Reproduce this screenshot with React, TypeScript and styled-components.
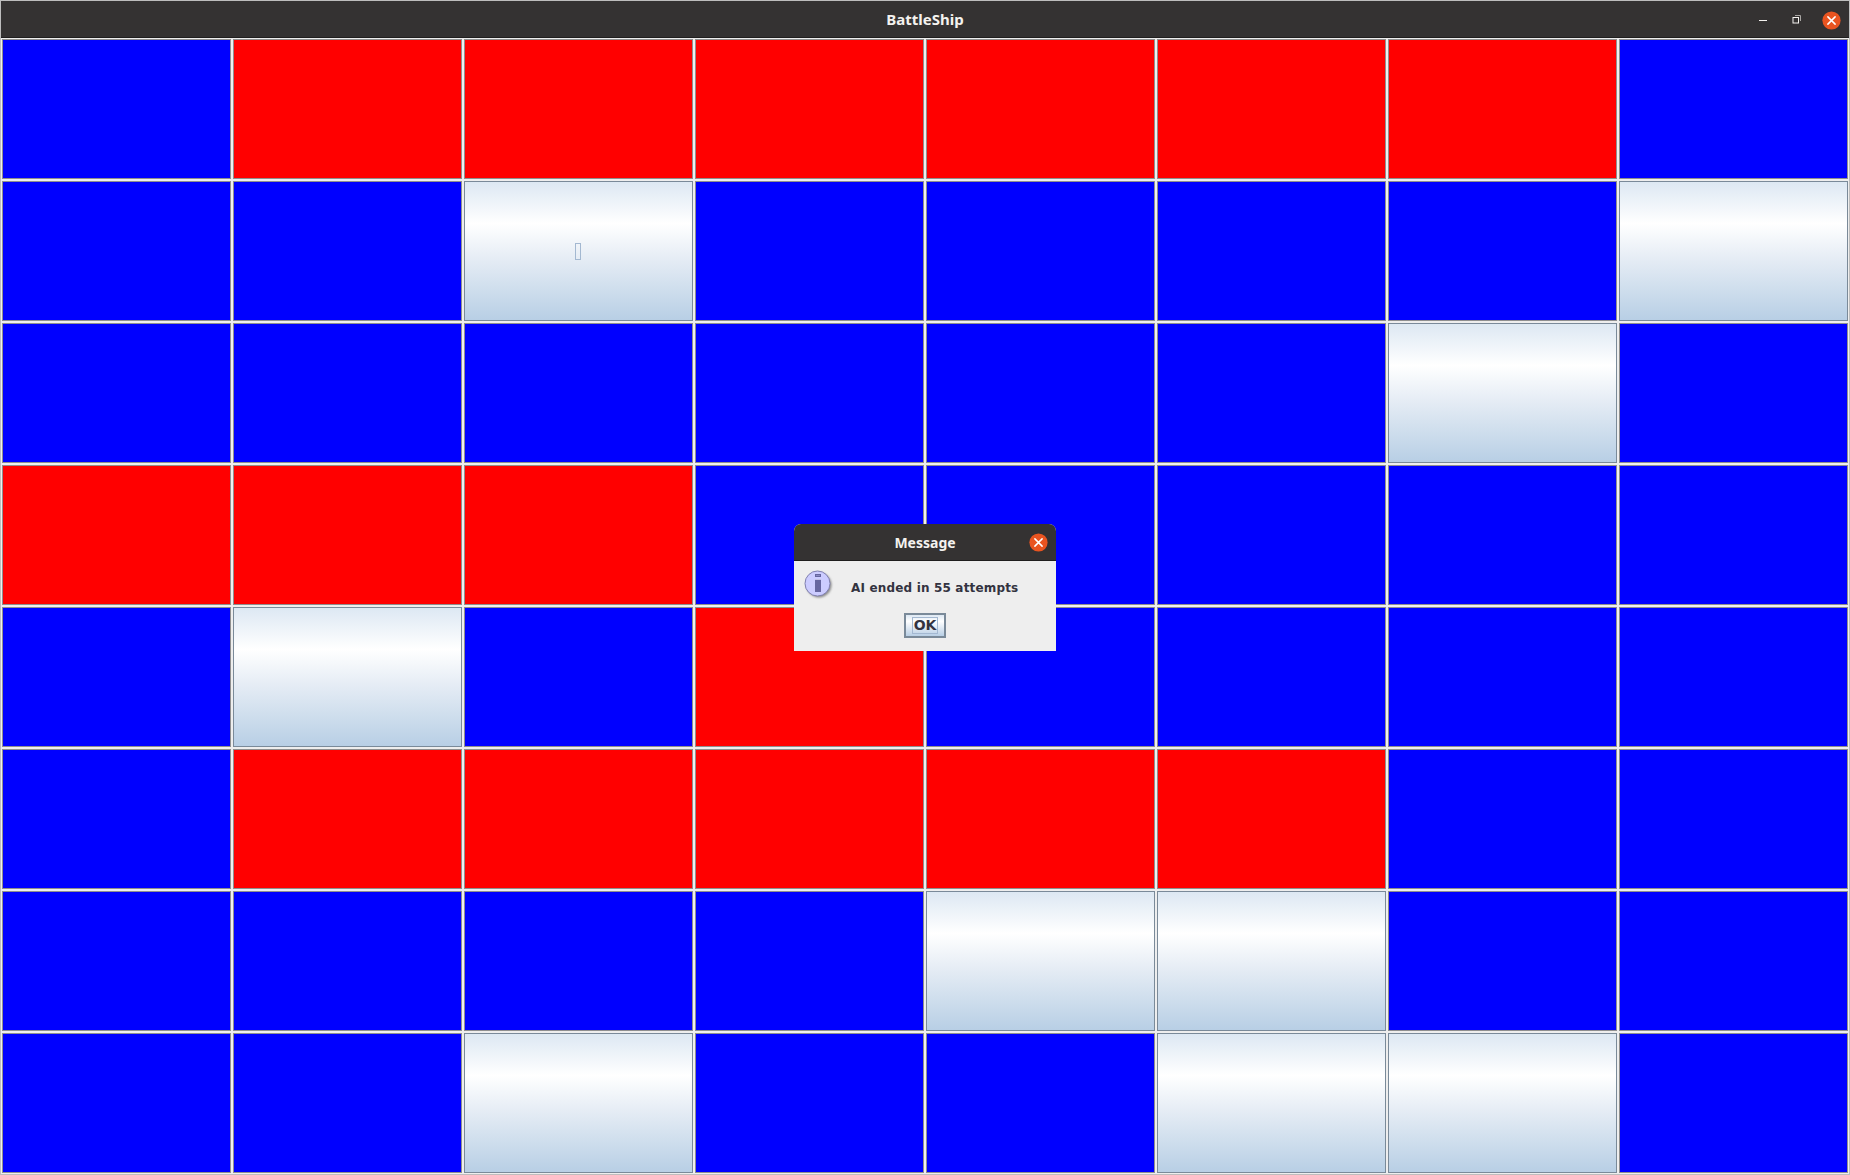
import { createGlobalStyle, styled } from "styled-components";

const GlobalStyle = createGlobalStyle`
    html, body {
        margin: 0;
        padding: 0;
        background: #eeeeee;
    }
    #root {
        width: 1850px;
        height: 1175px;
    }
`

const Win = styled.div`
    position: relative;
    width: 1850px;
    height: 1175px;
    overflow: hidden;
    box-sizing: border-box;
    display: flex;
    flex-direction: column;
    background: #eeeeee;
    box-shadow: inset 0 0 0 1px #bdbdbd;
`
const TitleBar = styled.header`
    position: relative;
    flex: none;
    height: 37px;
    margin: 1px 1px 0;
    background: #343232;
    border-bottom: 1px solid #1f1e1e;
    box-sizing: border-box;
    display: flex;
    align-items: center;
    justify-content: center;
    color: #f4f2ef;
    font: bold 15px "Noto Sans", sans-serif;
`
const WinControls = styled.div`
    position: absolute;
    right: 8px;
    top: 9px;
    display: flex;
    align-items: center;
    gap: 20px;
`
const CtlIcon = styled.svg`
    display: block;
`
const MinIcon = styled(CtlIcon)`
    margin-right: 4px;
`
const Board = styled.main`
    flex: none;
    margin: 1px 0 0 2px;
    width: 1846px;
    display: grid;
    grid-template-columns: repeat(8, 229px);
    grid-auto-rows: 140px;
    gap: 2px;
`
const Cell = styled.div<{ $kind: "b" | "r" | "m" }>`
    box-sizing: border-box;
    border: 1px solid ${p => (p.$kind === "m" ? "#7a8a99" : "#8f8f8f")};
    display: flex;
    align-items: center;
    justify-content: center;
    background: ${p =>
        p.$kind === "b"
            ? "#0000ff"
            : p.$kind === "r"
            ? "#ff0000"
            : "linear-gradient(180deg, #dde8f3 0%, #ffffff 30%, #e6edf5 55%, #b8cfe5 100%)"};
`
const Tofu = styled.span`
    box-sizing: border-box;
    width: 6px;
    height: 17px;
    margin-right: 2px;
    border: 1px solid #a3b8d1;
`
const Dialog = styled.section`
    position: absolute;
    left: 794px;
    top: 524px;
    width: 262px;
    height: 127px;
    background: #eeeeee;
    border-radius: 7px 7px 0 0;
    overflow: hidden;
    display: flex;
    flex-direction: column;
`
const DialogTitle = styled.header`
    position: relative;
    flex: none;
    height: 37px;
    box-sizing: border-box;
    background: #343232;
    border-bottom: 1px solid #1f1e1e;
    display: flex;
    align-items: center;
    justify-content: center;
    color: #f4f2ef;
    font: bold 14px "Noto Sans", sans-serif;
`
const DialogClose = styled.div`
    position: absolute;
    right: 8px;
    top: 9px;
`
const DialogBody = styled.div`
    flex: 1;
    display: flex;
    flex-direction: column;
    align-items: center;
    padding-top: 10px;
`
const MsgRow = styled.div`
    align-self: stretch;
    display: flex;
    align-items: center;
    padding-left: 10px;
    height: 28px;
    gap: 17px;
`
const Msg = styled.span`
    color: #333340;
    font: bold 12px "DejaVu Sans", sans-serif;
    letter-spacing: 0.17px;
    position: relative;
    top: 3px;
`
const OkBtn = styled.button`
    margin-top: 14px;
    width: 42px;
    height: 25px;
    padding: 0;
    box-sizing: border-box;
    border: 2px solid #7a8a99;
    background: linear-gradient(180deg, #dde8f3 0%, #ffffff 30%, #e6edf5 55%, #b8cfe5 100%);
    display: flex;
    align-items: center;
    justify-content: center;
    color: #333340;
    font: bold 14px "DejaVu Sans", sans-serif;
`
const OkFocus = styled.span`
    border: 1px solid #a3b8d1;
    padding: 0 1px;
    line-height: 15px;
`

const layout = [
    "brrrrrrb",
    "bbmbbbbm",
    "bbbbbbmb",
    "rrrbbbbb",
    "bmbrbbbb",
    "brrrrrbb",
    "bbbbmmbb",
    "bbmbbmmb",
];

function CloseBadge({ size }: { size: number }) {
    return (
        <CtlIcon width={size} height={size} viewBox="0 0 20 20">
            <circle cx="10" cy="10" r="9.6" fill="#e95420" />
            <path d="M6.2 6.2 13.8 13.8M13.8 6.2 6.2 13.8" stroke="#fff" strokeWidth="1.6" strokeLinecap="round" />
        </CtlIcon>
    );
}

function InfoIcon() {
    return (
        <CtlIcon width="30" height="30" viewBox="0 0 30 30">
            <defs>
                <filter id="sh" x="-20%" y="-20%" width="150%" height="150%">
                    <feGaussianBlur stdDeviation="1.2" />
                </filter>
            </defs>
            <circle cx="15" cy="15" r="12.5" fill="#8a8a8a" filter="url(#sh)" />
            <circle cx="13.5" cy="13.5" r="12.5" fill="#ccccff" stroke="#8080b0" strokeWidth="1" />
            <rect x="11" y="4" width="6" height="3" fill="#6666a0" />
            <rect x="11" y="9" width="6" height="13" fill="#6666a0" />
            <rect x="12" y="5" width="4" height="1" fill="#ccccff" opacity="0.35" />
            <rect x="11" y="9" width="6" height="1" fill="#e8e8ff" opacity="0.7" />
        </CtlIcon>
    );
}

export default function App() {
    return (
        <>
            <GlobalStyle />
            <Win>
                <TitleBar>
                    BattleShip
                    <WinControls>
                        <MinIcon width="10" height="20" viewBox="0 0 10 20">
                            <rect x="1" y="10" width="8" height="1" fill="#f4f2ef" />
                        </MinIcon>
                        <CtlIcon width="10" height="12" viewBox="0 0 10 12">
                            <path d="M3 1.5H8.5V7" fill="none" stroke="#a9a7a4" />
                            <rect x="1" y="3.5" width="5.5" height="5.5" fill="none" stroke="#f4f2ef" />
                        </CtlIcon>
                        <CloseBadge size={19} />
                    </WinControls>
                </TitleBar>
                <Board>
                    {layout.flatMap((row, r) =>
                        row.split("").map((k, c) => (
                            <Cell key={`${r}-${c}`} $kind={k as "b" | "r" | "m"}>
                                {r === 1 && c === 2 && <Tofu />}
                            </Cell>
                        ))
                    )}
                </Board>
                <Dialog>
                    <DialogTitle>
                        Message
                        <DialogClose>
                            <CloseBadge size={19} />
                        </DialogClose>
                    </DialogTitle>
                    <DialogBody>
                        <MsgRow>
                            <InfoIcon />
                            <Msg>AI ended in 55 attempts</Msg>
                        </MsgRow>
                        <OkBtn>
                            <OkFocus>OK</OkFocus>
                        </OkBtn>
                    </DialogBody>
                </Dialog>
            </Win>
        </>
    );
}
